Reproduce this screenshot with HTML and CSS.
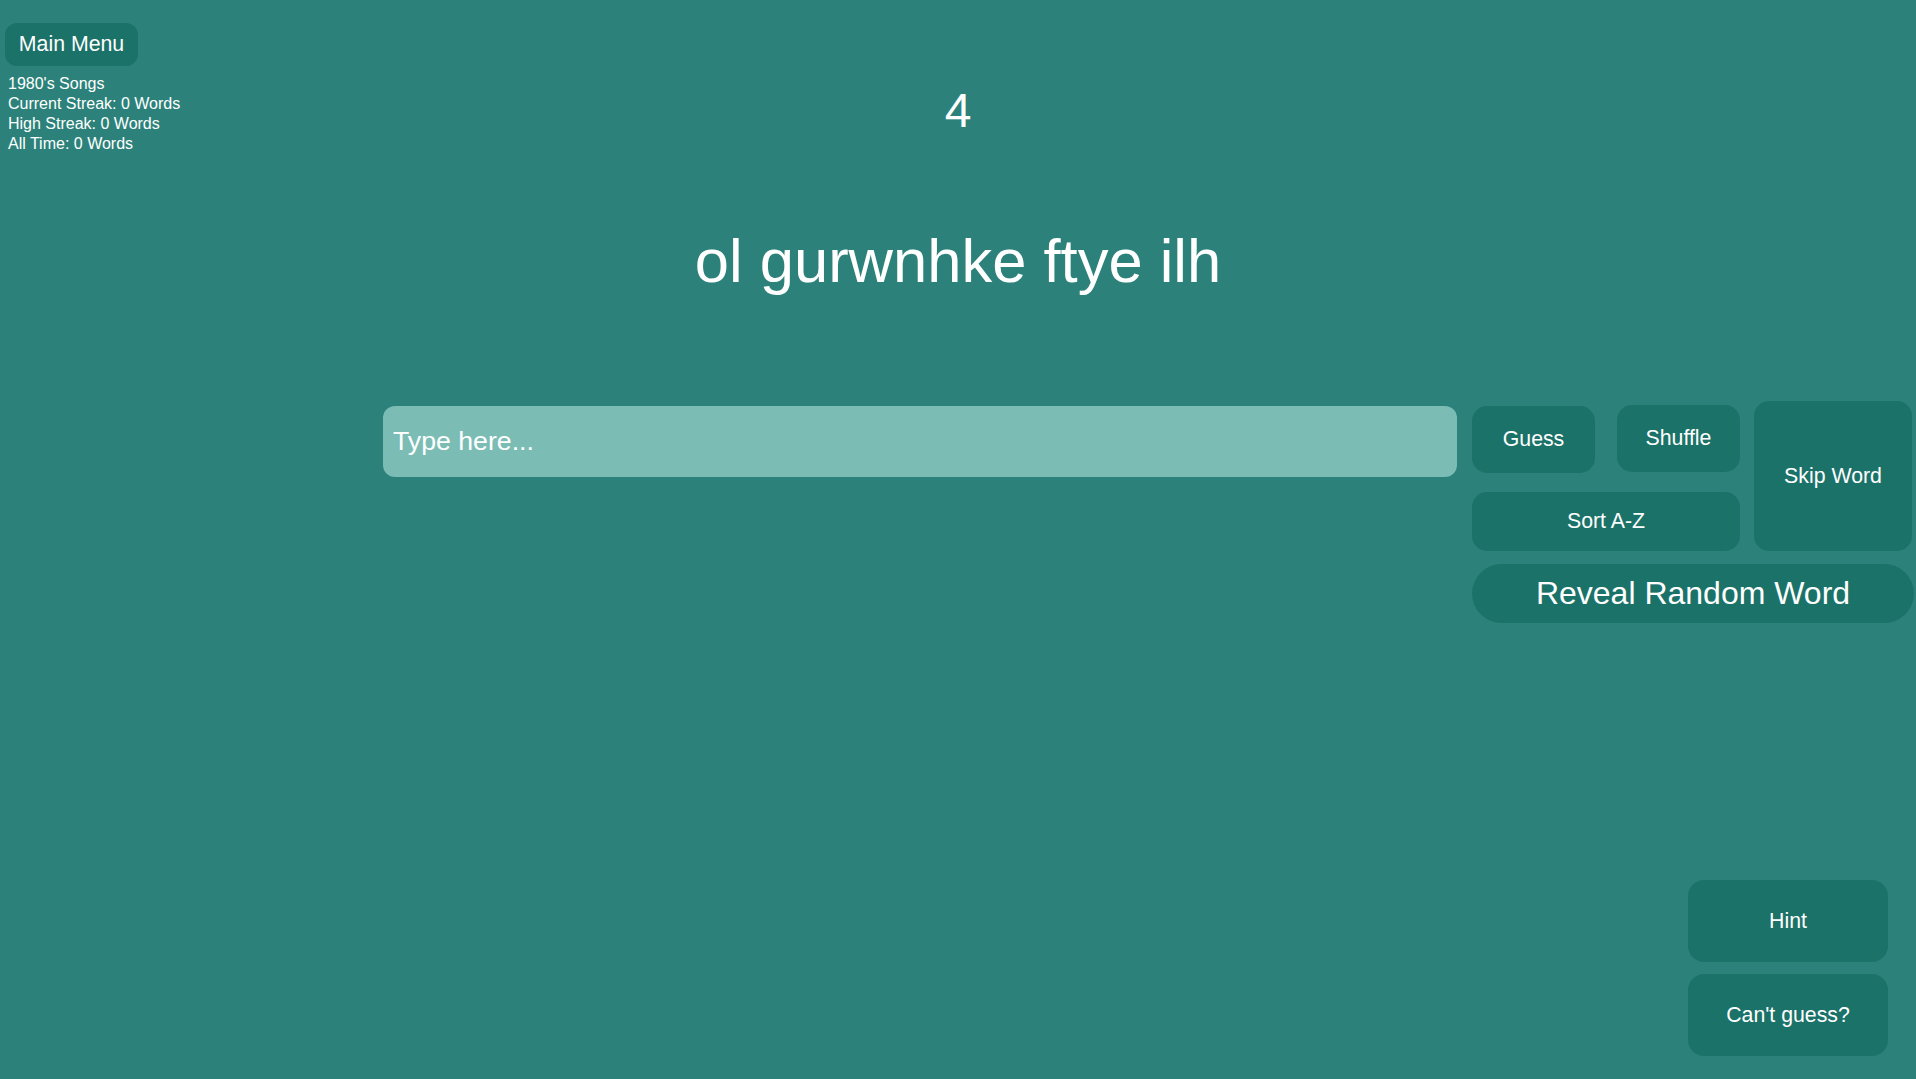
FILE: index.html
```html
<!DOCTYPE html>
<html lang="en">
<head>
<meta charset="utf-8">
<title>Word Scramble</title>
<link rel="stylesheet" href="styles.css">
</head>
<body>
<div class="page">
  <header class="top">
    <div class="left">
      <button class="btn menu">Main Menu</button>
      <div class="stats">
        <div>1980's Songs</div>
        <div>Current Streak: 0 Words</div>
        <div>High Streak: 0 Words</div>
        <div>All Time: 0 Words</div>
      </div>
    </div>
    <div class="count">4</div>
    <div class="right"></div>
  </header>

  <div class="scramble">ol gurwnhke ftye ilh</div>

  <div class="play">
    <input class="answer" type="text" placeholder="Type here...">
    <div class="panel">
      <button class="btn guess">Guess</button>
      <button class="btn shuffle">Shuffle</button>
      <button class="btn skip">Skip Word</button>
      <button class="btn sort">Sort A-Z</button>
      <button class="btn reveal">Reveal Random Word</button>
    </div>
  </div>

  <div class="bottom">
    <button class="btn big">Hint</button>
    <button class="btn big">Can't guess?</button>
  </div>
</div>
</body>
</html>
```

FILE: styles.css
```css
html, body {
  margin: 0;
  padding: 0;
}

body {
  background: #2c827a;
  color: #ffffff;
  font-family: "Liberation Sans", Arial, Helvetica, sans-serif;
}

.page {
  min-height: 100vh;
  display: flex;
  flex-direction: column;
  box-sizing: border-box;
}

.btn {
  background: #1b7269;
  color: #ffffff;
  border: none;
  font-family: "Liberation Sans", Arial, Helvetica, sans-serif;
  font-size: 21.3px;
  border-radius: 15px;
  padding: 0;
  cursor: pointer;
}

/* header */
.top {
  display: grid;
  grid-template-columns: 1fr auto 1fr;
  padding-top: 23px;
}

.left {
  padding-left: 5px;
  display: flex;
  flex-direction: column;
  align-items: flex-start;
}

.menu {
  width: 133px;
  height: 43px;
  border-radius: 12px;
}

.stats {
  margin-top: 8px;
  padding-left: 3px;
  font-size: 16px;
  line-height: 20px;
}

.count {
  margin-top: 59.6px;
  font-size: 48px;
  line-height: normal;
  align-self: start;
  text-align: center;
}

/* scrambled word */
.scramble {
  margin-top: 70.6px;
  text-align: center;
  font-size: 61.5px;
  line-height: normal;
}

/* play row */
.play {
  display: flex;
  align-items: flex-start;
  margin-top: 105.7px;
  padding-left: 383px;
  gap: 15px;
}

.answer {
  width: 1074px;
  height: 71px;
  margin-top: 5px;
  box-sizing: border-box;
  border: none;
  border-radius: 12px;
  background: #7bbdb5;
  color: #ffffff;
  font-family: "Liberation Sans", Arial, Helvetica, sans-serif;
  font-size: 26.7px;
  padding: 0 10px;
  outline: none;
}

.answer::placeholder {
  color: #ffffff;
  opacity: 1;
}

.panel {
  width: 442px;
  display: grid;
  grid-template-columns: 127px 127px 160px;
  grid-template-rows: 77px 60px 59px;
  column-gap: 14px;
  row-gap: 13px;
}

.guess {
  grid-column: 1;
  grid-row: 1;
  width: 123px;
  height: 67px;
  align-self: center;
  justify-self: start;
}

.shuffle {
  grid-column: 2;
  grid-row: 1;
  width: 123px;
  height: 67px;
  align-self: center;
  justify-self: end;
  margin-top: -2px;
}

.skip {
  grid-column: 3;
  grid-row: 1 / span 2;
  width: 158px;
}

.sort {
  grid-column: 1 / span 2;
  grid-row: 2;
  height: 59px;
  align-self: end;
}

.reveal {
  grid-column: 1 / span 3;
  grid-row: 3;
  font-size: 32px;
  border-radius: 30px;
}

/* bottom right */
.bottom {
  margin-top: auto;
  align-self: flex-end;
  display: flex;
  flex-direction: column;
  gap: 12px;
  padding: 0 28px 23px 0;
}

.big {
  width: 200px;
  height: 82px;
  border-radius: 16px;
}
```
